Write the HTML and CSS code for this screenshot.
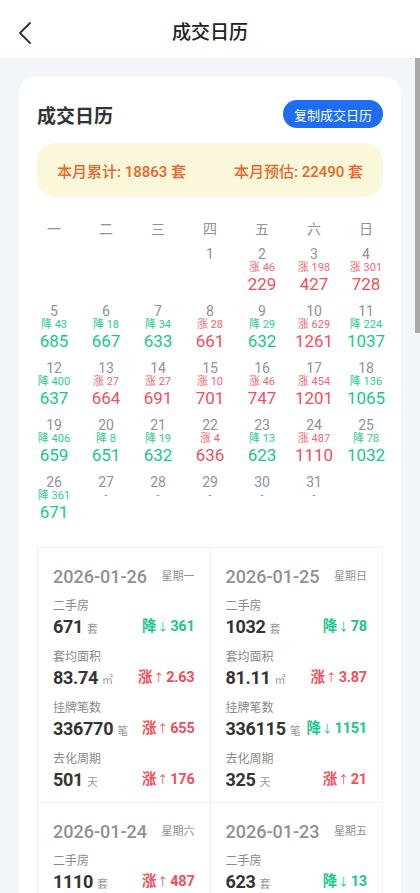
FILE: index.html
```html
<!DOCTYPE html>
<html lang="zh-CN">
<head>
<meta charset="utf-8">
<title>成交日历</title>
<link rel="stylesheet" href="styles.css">
</head>
<body>
<header class="header">
  <div class="back"><svg width="14" height="22" viewBox="0 0 14 22"><polyline points="12,1 2,11 12,21" fill="none" stroke="#333" stroke-width="1.8" stroke-linecap="round" stroke-linejoin="round"/></svg></div>
  <h1 class="title">成交日历</h1>
  <div></div>
</header>
<div class="scrollbar"></div>
<main class="main">
  <section class="card">
    <div class="card-head">
      <h2>成交日历</h2>
      <button class="copy">复制成交日历</button>
    </div>
    <div class="summary">
      <span>本月累计: 18863 套</span>
      <span>本月预估: 22490 套</span>
    </div>
    <div class="weekdays">
      <span>一</span><span>二</span><span>三</span><span>四</span><span>五</span><span>六</span><span>日</span>
    </div>
    <div class="days">
      <div class="cell"></div><div class="cell"></div><div class="cell"></div>
      <div class="cell"><span class="d">1</span></div>
      <div class="cell up"><span class="d">2</span><span class="c">涨 46</span><span class="v">229</span></div>
      <div class="cell up"><span class="d">3</span><span class="c">涨 198</span><span class="v">427</span></div>
      <div class="cell up"><span class="d">4</span><span class="c">涨 301</span><span class="v">728</span></div>

      <div class="cell down"><span class="d">5</span><span class="c">降 43</span><span class="v">685</span></div>
      <div class="cell down"><span class="d">6</span><span class="c">降 18</span><span class="v">667</span></div>
      <div class="cell down"><span class="d">7</span><span class="c">降 34</span><span class="v">633</span></div>
      <div class="cell up"><span class="d">8</span><span class="c">涨 28</span><span class="v">661</span></div>
      <div class="cell down"><span class="d">9</span><span class="c">降 29</span><span class="v">632</span></div>
      <div class="cell up"><span class="d">10</span><span class="c">涨 629</span><span class="v">1261</span></div>
      <div class="cell down"><span class="d">11</span><span class="c">降 224</span><span class="v">1037</span></div>

      <div class="cell down"><span class="d">12</span><span class="c">降 400</span><span class="v">637</span></div>
      <div class="cell up"><span class="d">13</span><span class="c">涨 27</span><span class="v">664</span></div>
      <div class="cell up"><span class="d">14</span><span class="c">涨 27</span><span class="v">691</span></div>
      <div class="cell up"><span class="d">15</span><span class="c">涨 10</span><span class="v">701</span></div>
      <div class="cell up"><span class="d">16</span><span class="c">涨 46</span><span class="v">747</span></div>
      <div class="cell up"><span class="d">17</span><span class="c">涨 454</span><span class="v">1201</span></div>
      <div class="cell down"><span class="d">18</span><span class="c">降 136</span><span class="v">1065</span></div>

      <div class="cell down"><span class="d">19</span><span class="c">降 406</span><span class="v">659</span></div>
      <div class="cell down"><span class="d">20</span><span class="c">降 8</span><span class="v">651</span></div>
      <div class="cell down"><span class="d">21</span><span class="c">降 19</span><span class="v">632</span></div>
      <div class="cell up"><span class="d">22</span><span class="c">涨 4</span><span class="v">636</span></div>
      <div class="cell down"><span class="d">23</span><span class="c">降 13</span><span class="v">623</span></div>
      <div class="cell up"><span class="d">24</span><span class="c">涨 487</span><span class="v">1110</span></div>
      <div class="cell down"><span class="d">25</span><span class="c">降 78</span><span class="v">1032</span></div>

      <div class="cell down"><span class="d">26</span><span class="c">降 361</span><span class="v">671</span></div>
      <div class="cell none"><span class="d">27</span><span class="c">-</span></div>
      <div class="cell none"><span class="d">28</span><span class="c">-</span></div>
      <div class="cell none"><span class="d">29</span><span class="c">-</span></div>
      <div class="cell none"><span class="d">30</span><span class="c">-</span></div>
      <div class="cell none"><span class="d">31</span><span class="c">-</span></div>
    </div>

    <div class="details">
      <div class="dcard">
        <div class="dhead"><span class="date">2026-01-26</span><span class="week">星期一</span></div>
        <div class="item"><div class="label">二手房</div><div class="row"><span><b class="num">671</b><span class="unit">套</span></span><span class="chg down">降<i>↓</i>361</span></div></div>
        <div class="item"><div class="label">套均面积</div><div class="row"><span><b class="num">83.74</b><span class="unit">㎡</span></span><span class="chg up">涨<i>↑</i>2.63</span></div></div>
        <div class="item"><div class="label">挂牌笔数</div><div class="row"><span><b class="num">336770</b><span class="unit">笔</span></span><span class="chg up">涨<i>↑</i>655</span></div></div>
        <div class="item"><div class="label">去化周期</div><div class="row"><span><b class="num">501</b><span class="unit">天</span></span><span class="chg up">涨<i>↑</i>176</span></div></div>
      </div>
      <div class="dcard">
        <div class="dhead"><span class="date">2026-01-25</span><span class="week">星期日</span></div>
        <div class="item"><div class="label">二手房</div><div class="row"><span><b class="num">1032</b><span class="unit">套</span></span><span class="chg down">降<i>↓</i>78</span></div></div>
        <div class="item"><div class="label">套均面积</div><div class="row"><span><b class="num">81.11</b><span class="unit">㎡</span></span><span class="chg up">涨<i>↑</i>3.87</span></div></div>
        <div class="item"><div class="label">挂牌笔数</div><div class="row"><span><b class="num">336115</b><span class="unit">笔</span></span><span class="chg down">降<i>↓</i>1151</span></div></div>
        <div class="item"><div class="label">去化周期</div><div class="row"><span><b class="num">325</b><span class="unit">天</span></span><span class="chg up">涨<i>↑</i>21</span></div></div>
      </div>
      <div class="dcard">
        <div class="dhead"><span class="date">2026-01-24</span><span class="week">星期六</span></div>
        <div class="item"><div class="label">二手房</div><div class="row"><span><b class="num">1110</b><span class="unit">套</span></span><span class="chg up">涨<i>↑</i>487</span></div></div>
        <div class="item"><div class="label">套均面积</div><div class="row"><span><b class="num">83.12</b><span class="unit">㎡</span></span><span class="chg up">涨<i>↑</i>1.02</span></div></div>
      </div>
      <div class="dcard">
        <div class="dhead"><span class="date">2026-01-23</span><span class="week">星期五</span></div>
        <div class="item"><div class="label">二手房</div><div class="row"><span><b class="num">623</b><span class="unit">套</span></span><span class="chg down">降<i>↓</i>13</span></div></div>
        <div class="item"><div class="label">套均面积</div><div class="row"><span><b class="num">82.10</b><span class="unit">㎡</span></span><span class="chg down">降<i>↓</i>0.54</span></div></div>
      </div>
    </div>
  </section>
</main>
</body>
</html>
```

FILE: styles.css
```css
* {
  box-sizing: border-box;
  margin: 0;
  padding: 0;
}

html, body {
  height: 893px;
  overflow: hidden;
}

body {
  width: 420px;
  background: #f2f6fa;
  font-family: Roboto, "Noto Sans CJK SC", sans-serif;
  color: #333;
  position: relative;
}

.header {
  height: 58px;
  background: #fff;
  display: grid;
  grid-template-columns: 60px 1fr 60px;
  align-items: center;
}

.back {
  padding-left: 18px;
  padding-top: 7px;
  display: flex;
  align-items: center;
}

.title {
  text-align: center;
  font-size: 19px;
  font-weight: 500;
  color: #222;
  line-height: 24px;
  padding-top: 8px;
}

.scrollbar {
  position: absolute;
  right: 0;
  top: 58px;
  width: 5px;
  height: 275px;
  background: #a9a9a9;
}

.main {
  padding: 19px 19px 0;
}

.card {
  background: #fff;
  border-radius: 16px 16px 0 0;
  padding: 23px 18px 0;
}

.card-head {
  display: flex;
  justify-content: space-between;
  align-items: center;
  height: 28px;
}

.card-head h2 {
  font-size: 19px;
  font-weight: 700;
  color: #333;
}

.copy {
  width: 100px;
  height: 28px;
  border: none;
  border-radius: 14px;
  background: #1d6ef3;
  color: #fff;
  font-family: inherit;
  font-size: 13px;
}

.summary {
  margin-top: 15px;
  height: 54px;
  border-radius: 18px;
  background: #fbf7da;
  display: flex;
  justify-content: space-between;
  align-items: center;
  padding: 0 20px;
  color: #e5652a;
  font-size: 15px;
  font-weight: 500;
}

.weekdays,
.days {
  margin: 0 -9px;
  display: grid;
  grid-template-columns: repeat(7, 1fr);
  text-align: center;
}

.weekdays {
  margin-top: 22px;
  height: 20px;
  line-height: 20px;
  font-size: 14px;
  color: #8d929b;
  margin-bottom: 7px;
}

.cell {
  height: 57px;
  display: flex;
  flex-direction: column;
  align-items: center;
}

.cell .d {
  font-size: 14px;
  height: 16px;
  line-height: 16px;
  color: #8d929b;
}

.cell .c {
  font-size: 11px;
  height: 12px;
  line-height: 12px;
  white-space: nowrap;
}

.cell .v {
  font-size: 17px;
  height: 21px;
  line-height: 21px;
}

.up .v { color: #f24f5b; }
.down .v { color: #17c88b; }
.up .c { color: #f26670; }
.down .c { color: #2ccb92; }
.none .c { color: #8d929b; }

.details {
  margin-top: 16px;
  display: grid;
  grid-template-columns: 1fr 1fr;
  border-top: 1px solid #eef0f3;
  border-left: 1px solid #eef0f3;
}

.dcard {
  border-right: 1px solid #eef0f3;
  border-bottom: 1px solid #eef0f3;
  padding: 19px 15px 10px 15px;
  min-width: 0;
}

.dhead {
  display: flex;
  justify-content: space-between;
  align-items: center;
  height: 20px;
}

.date {
  font-size: 18px;
  line-height: 20px;
  font-weight: 500;
  color: #8e9198;
}

.week {
  font-size: 11px;
  line-height: 20px;
  color: #8e9198;
}

.item {
  margin-top: 9px;
}

.dhead + .item {
  margin-top: 10px;
}

.label {
  font-size: 12px;
  height: 18px;
  line-height: 18px;
  color: #8a8a8a;
}

.row {
  display: flex;
  justify-content: space-between;
  align-items: center;
  height: 24px;
  white-space: nowrap;
}

.row > span {
  display: flex;
  align-items: baseline;
  height: 24px;
  line-height: 24px;
}

.num {
  font-size: 18px;
  font-weight: 700;
  letter-spacing: -0.3px;
  color: #333;
}

.unit {
  font-size: 11px;
  color: #9a9a9a;
  margin-left: 4px;
}

.chg {
  font-size: 14.5px;
  font-weight: 700;
  letter-spacing: -0.2px;
}

.chg i {
  font-style: normal;
  font-weight: 400;
  font-size: 11px;
  margin: 0 2px 0 1px;
}

.chg.up { color: #f24f5b; }
.chg.down { color: #17c88b; }
```
